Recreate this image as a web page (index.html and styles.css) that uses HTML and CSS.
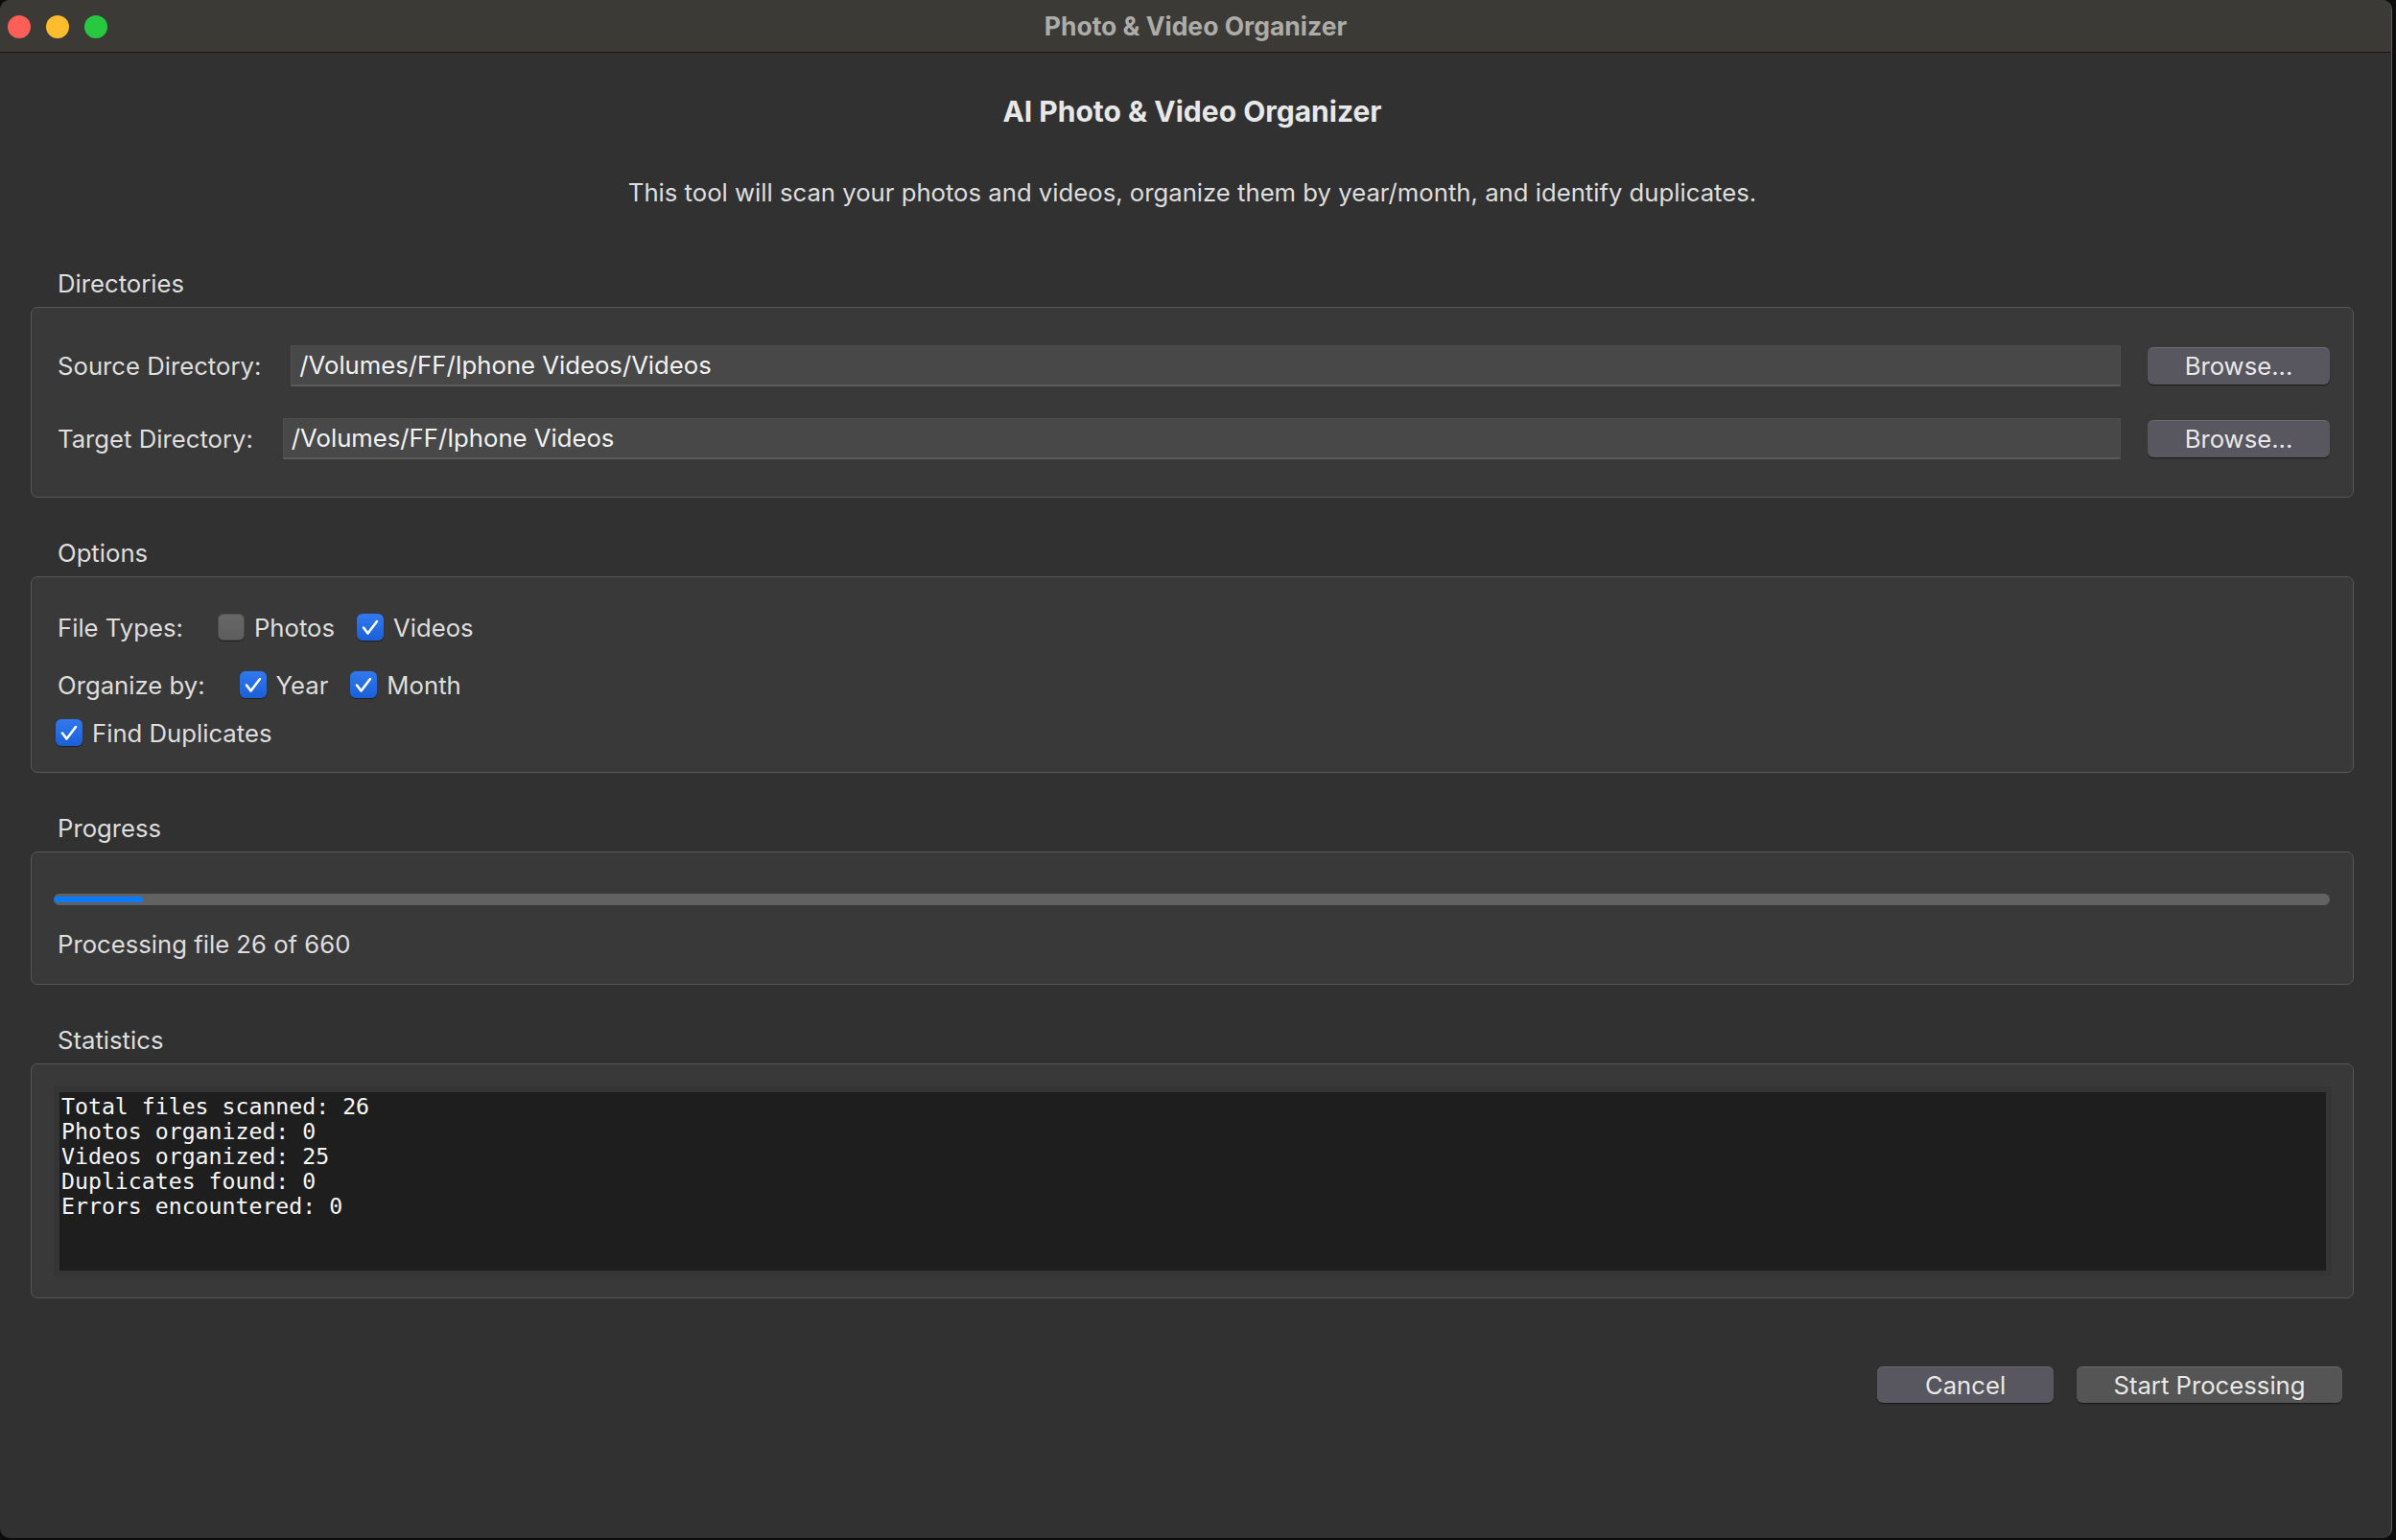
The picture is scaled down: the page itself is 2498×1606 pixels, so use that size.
FILE: index.html
```html
<!DOCTYPE html>
<html lang="en">
<head>
<meta charset="utf-8">
<title>Photo &amp; Video Organizer</title>
<link rel="stylesheet" href="styles.css">
</head>
<body>
<div class="window">
  <header class="titlebar">
    <div class="lights">
      <span class="light red"></span>
      <span class="light yellow"></span>
      <span class="light green"></span>
    </div>
    <div class="title">Photo &amp; Video Organizer</div>
    <div></div>
  </header>

  <main class="content">
    <h1 class="heading">AI Photo &amp; Video Organizer</h1>
    <p class="subtitle">This tool will scan your photos and videos, organize them by year/month, and identify duplicates.</p>

    <section class="group dirs">
      <div class="group-title">Directories</div>
      <div class="group-box dirs-box">
        <div class="dir-row">
          <span class="dir-label">Source Directory:</span>
          <div class="path-input">/Volumes/FF/Iphone Videos/Videos</div>
          <button class="btn browse">Browse...</button>
        </div>
        <div class="dir-row">
          <span class="dir-label">Target Directory:</span>
          <div class="path-input">/Volumes/FF/Iphone Videos</div>
          <button class="btn browse">Browse...</button>
        </div>
      </div>
    </section>

    <section class="group">
      <div class="group-title">Options</div>
      <div class="group-box opts-box">
        <div class="opt-row row1">
          <span class="opt-label">File Types:</span>
          <label class="check"><span class="box off"></span><span>Photos</span></label>
          <label class="check"><span class="box on"><svg viewBox="0 0 28 28"><path d="M7 14.5 L11.5 20.5 L21 8"/></svg></span><span>Videos</span></label>
        </div>
        <div class="opt-row row2">
          <span class="opt-label">Organize by:</span>
          <label class="check"><span class="box on"><svg viewBox="0 0 28 28"><path d="M7 14.5 L11.5 20.5 L21 8"/></svg></span><span>Year</span></label>
          <label class="check"><span class="box on"><svg viewBox="0 0 28 28"><path d="M7 14.5 L11.5 20.5 L21 8"/></svg></span><span>Month</span></label>
        </div>
        <div class="opt-row row3">
          <label class="check"><span class="box on"><svg viewBox="0 0 28 28"><path d="M7 14.5 L11.5 20.5 L21 8"/></svg></span><span>Find Duplicates</span></label>
        </div>
      </div>
    </section>

    <section class="group">
      <div class="group-title">Progress</div>
      <div class="group-box prog-box">
        <div class="track"><div class="fill" style="width: 3.94%"></div></div>
        <div class="status">Processing file 26 of 660</div>
      </div>
    </section>

    <section class="group">
      <div class="group-title">Statistics</div>
      <div class="group-box stats-box">
<pre class="log">Total files scanned: 26
Photos organized: 0
Videos organized: 25
Duplicates found: 0
Errors encountered: 0</pre>
      </div>
    </section>

    <div class="actions">
      <button class="btn cancel">Cancel</button>
      <button class="btn start">Start Processing</button>
    </div>
  </main>
</div>
</body>
</html>
```

FILE: styles.css
```css
* { box-sizing: border-box; }

html, body {
  margin: 0;
  padding: 0;
}

body {
  width: 2498px;
  height: 1606px;
  overflow: hidden;
  background: #0c0c0c;
  font-family: Inter, "Liberation Sans", sans-serif;
  color: #dedede;
}

.window {
  width: 2494px;
  height: 1604px;
  background: #313131;
  border-radius: 10px;
  overflow: hidden;
  border-right: 1px solid #5a5a5a;
}

/* title bar */
.titlebar {
  height: 55px;
  background: #3b3a36;
  border-bottom: 1px solid #141414;
  display: grid;
  grid-template-columns: 1fr auto 1fr;
  align-items: center;
}

.lights {
  display: flex;
  gap: 16px;
  padding-left: 8px;
  padding-top: 1px;
}

.light {
  width: 24px;
  height: 24px;
  border-radius: 50%;
}
.light.red { background: #fe5f57; }
.light.yellow { background: #febc2e; }
.light.green { background: #28c840; }

.title {
  font-size: 26.5px;
  font-weight: 700;
  color: #adaca8;
}

/* content */
.content {
  padding: 41px 39px 0 32px;
  display: flex;
  flex-direction: column;
}

.heading {
  margin: 0;
  text-align: center;
  font-size: 30px;
  font-weight: 700;
  line-height: 40px;
  color: #e8e8e8;
}

.subtitle {
  margin: 49px 0 0;
  text-align: center;
  font-size: 25.7px;
  line-height: 32px;
  color: #dedede;
}

.group { margin-top: 42px; }
.group.dirs { margin-top: 63px; }

.group-title {
  font-size: 25.7px;
  line-height: 32px;
  padding-left: 28px;
  margin-bottom: 8px;
  color: #dedede;
}

.group-box {
  background: #393939;
  border: 1px solid #575757;
  border-radius: 7px;
}

/* directories */
.dirs-box {
  padding: 39px 24px 39px 27px;
  display: flex;
  flex-direction: column;
  gap: 33px;
}

.dir-row {
  display: flex;
  align-items: center;
  height: 43px;
}

.dir-label {
  font-size: 25.7px;
  margin-right: 31px;
  white-space: nowrap;
}

.path-input {
  flex: 1;
  height: 43px;
  background: #484848;
  border: 1px solid #4d4d4d;
  border-bottom: 2px solid #5b5b5b;
  padding-left: 8px;
  font-size: 25.7px;
  line-height: 40px;
  color: #f2f2f2;
}

.btn {
  font-family: Inter, "Liberation Sans", sans-serif;
  font-size: 25.7px;
  color: #e8e8e8;
  background: #58565e;
  border: none;
  border-radius: 6px;
  box-shadow: inset 0 1px 0 rgba(255, 255, 255, 0.12), 0 1px 1px rgba(0, 0, 0, 0.55);
  padding: 0;
  cursor: default;
}

.btn.browse {
  width: 190px;
  height: 39px;
  margin-left: 28px;
}

/* options */
.opts-box {
  padding: 38px 24px 27px 25px;
  display: flex;
  flex-direction: column;
}

.opt-row {
  display: flex;
  align-items: center;
  height: 28px;
  font-size: 25.7px;
}
.opt-row.row2 { margin-top: 32px; }
.opt-row.row3 { margin-top: 22px; }

.opt-label {
  margin-left: 2px;
  margin-right: 36px;
}

.check {
  display: flex;
  align-items: center;
  gap: 10px;
  margin-right: 23px;
}

.box {
  width: 28px;
  height: 28px;
  border-radius: 6px;
  display: flex;
  flex: none;
}

.box.off {
  background: linear-gradient(#686868, #5d5d5d);
  box-shadow: inset 0 0 0 1px rgba(0, 0, 0, 0.22), 0 1px 1px rgba(0, 0, 0, 0.45);
}

.box.on {
  background: linear-gradient(#3179f0, #1b5fd7);
  box-shadow: 0 1px 1px rgba(0, 0, 0, 0.45);
}

.box svg {
  width: 28px;
  height: 28px;
}

.box svg path {
  fill: none;
  stroke: #ffffff;
  stroke-width: 2.6;
  stroke-linecap: round;
  stroke-linejoin: round;
}

/* progress */
.prog-box {
  padding: 43px 24px 25px 23px;
}

.track {
  height: 12px;
  background: #626262;
  border-radius: 6px;
  display: flex;
  align-items: center;
  overflow: hidden;
}

.fill {
  height: 6px;
  background: #0a7aff;
  border-radius: 3px;
}

.status {
  margin-top: 25px;
  padding-left: 4px;
  font-size: 25.7px;
  line-height: 32px;
}

/* statistics */
.stats-box {
  padding: 23px 22px 22px 23px;
}

.log {
  margin: 0;
  height: 198px;
  border: 6px solid #353535;
  background: #1e1e1e;
  padding: 2px 2px;
  font-family: "DejaVu Sans Mono", "Liberation Mono", monospace;
  font-size: 23.2px;
  line-height: 26px;
  color: #f6f6f6;
  white-space: pre;
}

/* actions */
.actions {
  margin-top: 71px;
  display: flex;
  justify-content: flex-end;
  gap: 24px;
  padding-right: 12px;
}

.btn.cancel {
  width: 184px;
  height: 38px;
}

.btn.start {
  width: 277px;
  height: 38px;
  background: #555555;
}
```
